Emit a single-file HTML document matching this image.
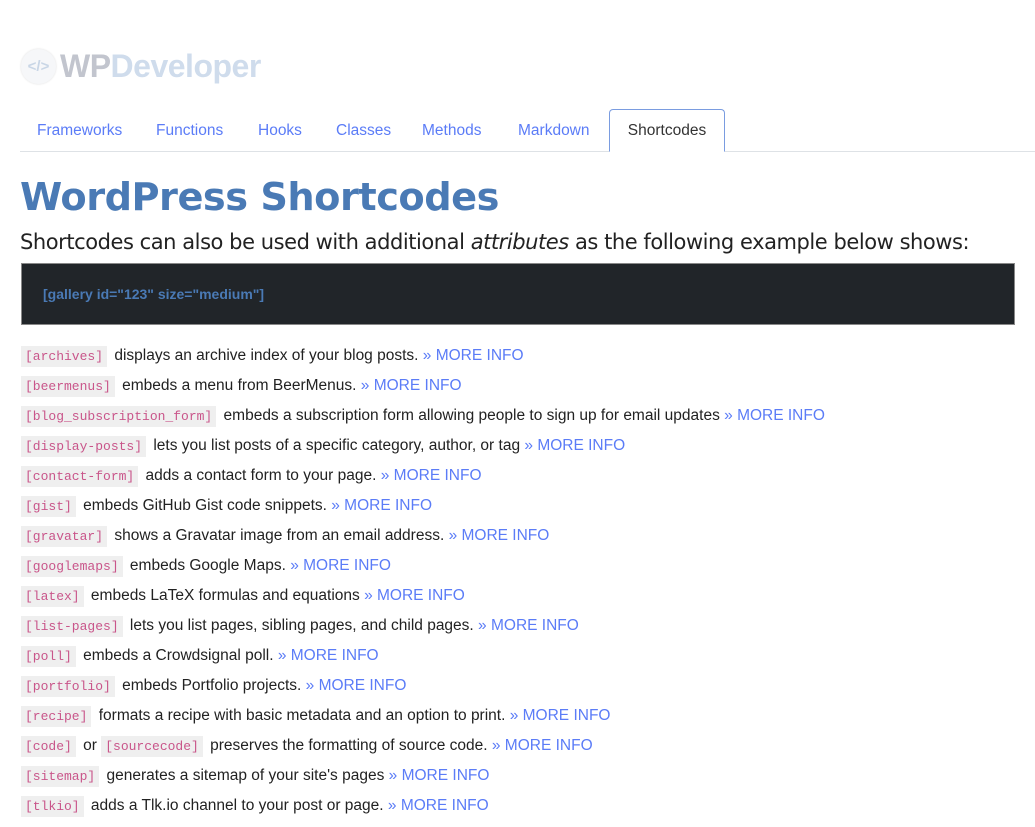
<!DOCTYPE html>
<html><head><meta charset="utf-8"><style>
body{margin:0;background:#fff;font-family:"Liberation Sans",sans-serif;width:1035px;height:815px;overflow:hidden;position:relative}
.logo{position:absolute;left:21px;top:48px;display:flex;align-items:center}
.circ{width:35px;height:35px;border-radius:50%;background:#f6f7f9;box-shadow:0 0 2px #ddd;display:flex;align-items:center;justify-content:center;color:#c9d6e6;font-weight:bold;font-size:15px}
.lt{font-weight:bold;font-size:32px;margin-left:4px;letter-spacing:-0.5px}
.nav{position:absolute;left:20px;top:109px;width:1015px;height:42px;border-bottom:1px solid #dee2e6}
.nav a{position:absolute;top:13px;font-size:15.5px;color:#5b7cf7;text-decoration:none}
.nav .act{left:589px;top:0;height:43px;border:1px solid #7a9ce0;border-bottom:1px solid #fff;border-radius:4px 4px 0 0;color:#333;text-align:center;line-height:42px;box-sizing:border-box;width:116px}
h1{position:absolute;left:20px;top:175px;margin:0;font-size:38.3px;color:#4a7ab5;font-family:"DejaVu Sans",sans-serif;font-weight:bold;letter-spacing:-0.5px}
.sub{position:absolute;left:20px;top:230px;font-size:21px;color:#222;font-family:"DejaVu Sans",sans-serif;letter-spacing:-0.45px}
.code{position:absolute;left:21px;top:263px;width:994px;height:62px;background:#212529;border:1px solid #888;box-sizing:border-box}
.code span{position:absolute;left:21px;top:22px;color:#4a7ab5;font-weight:bold;font-size:14px}
.rows{position:absolute;left:21px;top:347px}
.r{height:30px;font-size:15.5px;color:#222;white-space:nowrap}
code{font-family:"Liberation Mono",monospace;font-size:13px;color:#c9558a;background:#efefef;padding:3px 4px;margin-right:3px}
.m{color:#5b7cf7}
</style></head><body>
<div class="logo"><div class="circ">&lt;/&gt;</div><span class="lt"><span style="color:#c2c5ce">WP</span><span style="color:#cfdcec">Developer</span></span></div>
<div class="nav">
<a style="left:17px">Frameworks</a><a style="left:136px">Functions</a><a style="left:238px">Hooks</a><a style="left:316px">Classes</a><a style="left:402px">Methods</a><a style="left:498px">Markdown</a><a class="act">Shortcodes</a>
</div>
<h1>WordPress Shortcodes</h1>
<div class="sub">Shortcodes can also be used with additional <i>attributes</i> as the following example below shows:</div>
<div class="code"><span>[gallery id="123" size="medium"]</span></div>
<div class="rows">
<div class="r"><code>[archives]</code> displays an archive index of your blog posts. <span class="m">» MORE INFO</span></div>
<div class="r"><code>[beermenus]</code> embeds a menu from BeerMenus. <span class="m">» MORE INFO</span></div>
<div class="r"><code>[blog_subscription_form]</code> embeds a subscription form allowing people to sign up for email updates <span class="m">» MORE INFO</span></div>
<div class="r"><code>[display-posts]</code> lets you list posts of a specific category, author, or tag <span class="m">» MORE INFO</span></div>
<div class="r"><code>[contact-form]</code> adds a contact form to your page. <span class="m">» MORE INFO</span></div>
<div class="r"><code>[gist]</code> embeds GitHub Gist code snippets. <span class="m">» MORE INFO</span></div>
<div class="r"><code>[gravatar]</code> shows a Gravatar image from an email address. <span class="m">» MORE INFO</span></div>
<div class="r"><code>[googlemaps]</code> embeds Google Maps. <span class="m">» MORE INFO</span></div>
<div class="r"><code>[latex]</code> embeds LaTeX formulas and equations <span class="m">» MORE INFO</span></div>
<div class="r"><code>[list-pages]</code> lets you list pages, sibling pages, and child pages. <span class="m">» MORE INFO</span></div>
<div class="r"><code>[poll]</code> embeds a Crowdsignal poll. <span class="m">» MORE INFO</span></div>
<div class="r"><code>[portfolio]</code> embeds Portfolio projects. <span class="m">» MORE INFO</span></div>
<div class="r"><code>[recipe]</code> formats a recipe with basic metadata and an option to print. <span class="m">» MORE INFO</span></div>
<div class="r"><code>[code]</code> or <code>[sourcecode]</code> preserves the formatting of source code. <span class="m">» MORE INFO</span></div>
<div class="r"><code>[sitemap]</code> generates a sitemap of your site's pages <span class="m">» MORE INFO</span></div>
<div class="r"><code>[tlkio]</code> adds a Tlk.io channel to your post or page. <span class="m">» MORE INFO</span></div>
</div>
</body></html>
